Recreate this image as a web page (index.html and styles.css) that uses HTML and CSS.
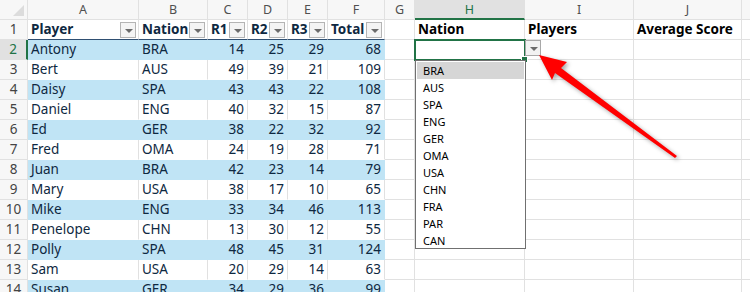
FILE: index.html
```
<!DOCTYPE html>
<html lang="en">
<head>
    <meta charset="UTF-8" />
    <meta name="viewport" content="width=device-width, initial-scale=1.0" />
    <title>Player scores</title>
    <link rel="stylesheet" href="styles.css">
</head>
<body>
    <div class="sheet">
        <div class="grid" id="grid"></div>

        <ul class="dv-list">
            <li class="hover">BRA</li>
            <li>AUS</li>
            <li>SPA</li>
            <li>ENG</li>
            <li>GER</li>
            <li>OMA</li>
            <li>USA</li>
            <li>CHN</li>
            <li>FRA</li>
            <li>PAR</li>
            <li>CAN</li>
        </ul>

        <svg class="arrow" width="750" height="292" viewBox="0 0 750 292">
            <polygon points="539,55 567,62 561,68 677,156 675,158 555,73 552,80" />
        </svg>
    </div>

    <script>
        const grid = document.getElementById('grid');
        const letters = ['', 'A', 'B', 'C', 'D', 'E', 'F', 'G', 'H', 'I', 'J', ''];
        const heads = ['Player', 'Nation', 'R1', 'R2', 'R3', 'Total'];
        const players = [
            ['Antony', 'BRA', 14, 25, 29, 68],
            ['Bert', 'AUS', 49, 39, 21, 109],
            ['Daisy', 'SPA', 43, 43, 22, 108],
            ['Daniel', 'ENG', 40, 32, 15, 87],
            ['Ed', 'GER', 38, 22, 32, 92],
            ['Fred', 'OMA', 24, 19, 28, 71],
            ['Juan', 'BRA', 42, 23, 14, 79],
            ['Mary', 'USA', 38, 17, 10, 65],
            ['Mike', 'ENG', 33, 34, 46, 113],
            ['Penelope', 'CHN', 13, 30, 12, 55],
            ['Polly', 'SPA', 48, 45, 31, 124],
            ['Sam', 'USA', 20, 29, 14, 63],
            ['Susan', 'GER', 34, 29, 36, 99],
        ];
        const summary = { 8: 'Nation', 9: 'Players', 10: 'Average Score' };

        function cell(cls, html) {
            const div = document.createElement('div');
            div.className = 'cell ' + cls;
            div.innerHTML = html || '';
            grid.appendChild(div);
            return div;
        }

        // column letters
        letters.forEach((l, i) => {
            if (i === 0) cell('corner');
            else cell('col-hdr' + (l === 'H' ? ' sel' : ''), l);
        });

        // row 1: table header + summary header
        cell('row-hdr', '1');
        heads.forEach(h => {
            cell('thead', `<span>${h}</span><span class="filter"></span>`);
        });
        for (let c = 7; c < 12; c++) {
            cell(summary[c] ? 'bold' : '', summary[c] || '');
        }

        // data rows
        players.forEach((p, i) => {
            const row = i + 2;
            const band = row % 2 === 0 ? ' band' : '';
            cell('row-hdr' + (row === 2 ? ' sel' : ''), row);
            p.forEach((v, c) => {
                cell('tcell' + band + (c > 1 ? ' num' : ''), v);
            });
            for (let c = 7; c < 12; c++) {
                const active = row === 2 && c === 8;
                const div = cell(active ? 'active' : '');
                if (active) div.innerHTML = '<span class="dv-btn"></span>';
            }
        });
    </script>
</body>
</html>
```

FILE: styles.css
```
body {
    margin: 0;
    font-family: "Noto Sans", Arial, sans-serif;
    background: #fff;
}
.sheet {
    position: relative;
    width: 750px;
    height: 292px;
    overflow: hidden;
}
.grid {
    display: grid;
    grid-template-columns: 28px 111px 69px 40px 40px 40px 57px 30px 110px 109px 108px 20px;
    grid-auto-rows: 20px;
}
.cell {
    box-sizing: border-box;
    display: flex;
    align-items: center;
    padding: 0 3px;
    border-right: 1px solid #e1e1e1;
    border-bottom: 1px solid #e1e1e1;
    font-size: 13.5px;
    line-height: 19px;
    color: #000;
    white-space: nowrap;
    overflow: hidden;
}
.corner {
    position: relative;
    background: #f7f7f7;
}
.corner::after {
    content: "";
    position: absolute;
    right: 3px;
    bottom: 3px;
    border-left: 11px solid transparent;
    border-bottom: 11px solid #dcdcdc;
}
.col-hdr {
    justify-content: center;
    background: #f7f7f7;
    font-size: 12.5px;
    color: #505050;
}
.col-hdr.sel {
    background: #e1e1e1;
    color: #217346;
    border-bottom: 2px solid #217346;
}
.row-hdr {
    justify-content: center;
    padding: 0;
    background: #f7f7f7;
    color: #444;
}
.row-hdr.sel {
    background: #e1e1e1;
    color: #217346;
    border-right: 2px solid #217346;
}
.bold {
    font-weight: bold;
}
.thead {
    justify-content: space-between;
    padding-right: 2px;
    font-weight: bold;
    color: #0e2841;
    border-bottom-color: #2f4f72;
}
.filter {
    position: relative;
    flex: none;
    width: 14px;
    height: 14px;
    border: 1px solid #b4b4b4;
    background: #f4f4f4;
}
.filter::after,
.dv-btn::after {
    content: "";
    position: absolute;
    left: 4px;
    top: 6px;
    border-left: 4px solid transparent;
    border-right: 4px solid transparent;
    border-top: 4px solid #6b6b6b;
}
.tcell {
    color: #0e2841;
    border-bottom-color: transparent;
}
.tcell.band {
    background: #c0e4f5;
    border-color: #c0e4f5;
}
.tcell.num {
    justify-content: flex-end;
}
.active {
    position: relative;
    overflow: visible;
    z-index: 2;
    outline: 2px solid #217346;
    outline-offset: -1px;
}
.active::after {
    content: "";
    position: absolute;
    right: -4px;
    bottom: -4px;
    width: 5px;
    height: 5px;
    background: #217346;
    border: 1px solid #fff;
}
.dv-btn {
    position: absolute;
    left: 100%;
    top: 0;
    margin-left: 1px;
    width: 14px;
    height: 14px;
    border: 1px solid #a8a8a8;
    background: #f2f2f2;
}
.dv-list {
    position: absolute;
    left: 415px;
    top: 60px;
    z-index: 3;
    box-sizing: border-box;
    width: 111px;
    height: 189px;
    margin: 0;
    padding: 1px;
    list-style: none;
    background: #fff;
    border: 1px solid #707070;
}
.dv-list li {
    height: 17px;
    padding-left: 6px;
    font-size: 11px;
    line-height: 17px;
    color: #000;
}
.dv-list li.hover {
    background: #d6d6d6;
}
.arrow {
    position: absolute;
    left: 0;
    top: 0;
    z-index: 4;
    pointer-events: none;
    filter: drop-shadow(2px 2px 2px rgba(0, 0, 0, 0.35));
}
.arrow polygon {
    fill: #ff0000;
}
```
